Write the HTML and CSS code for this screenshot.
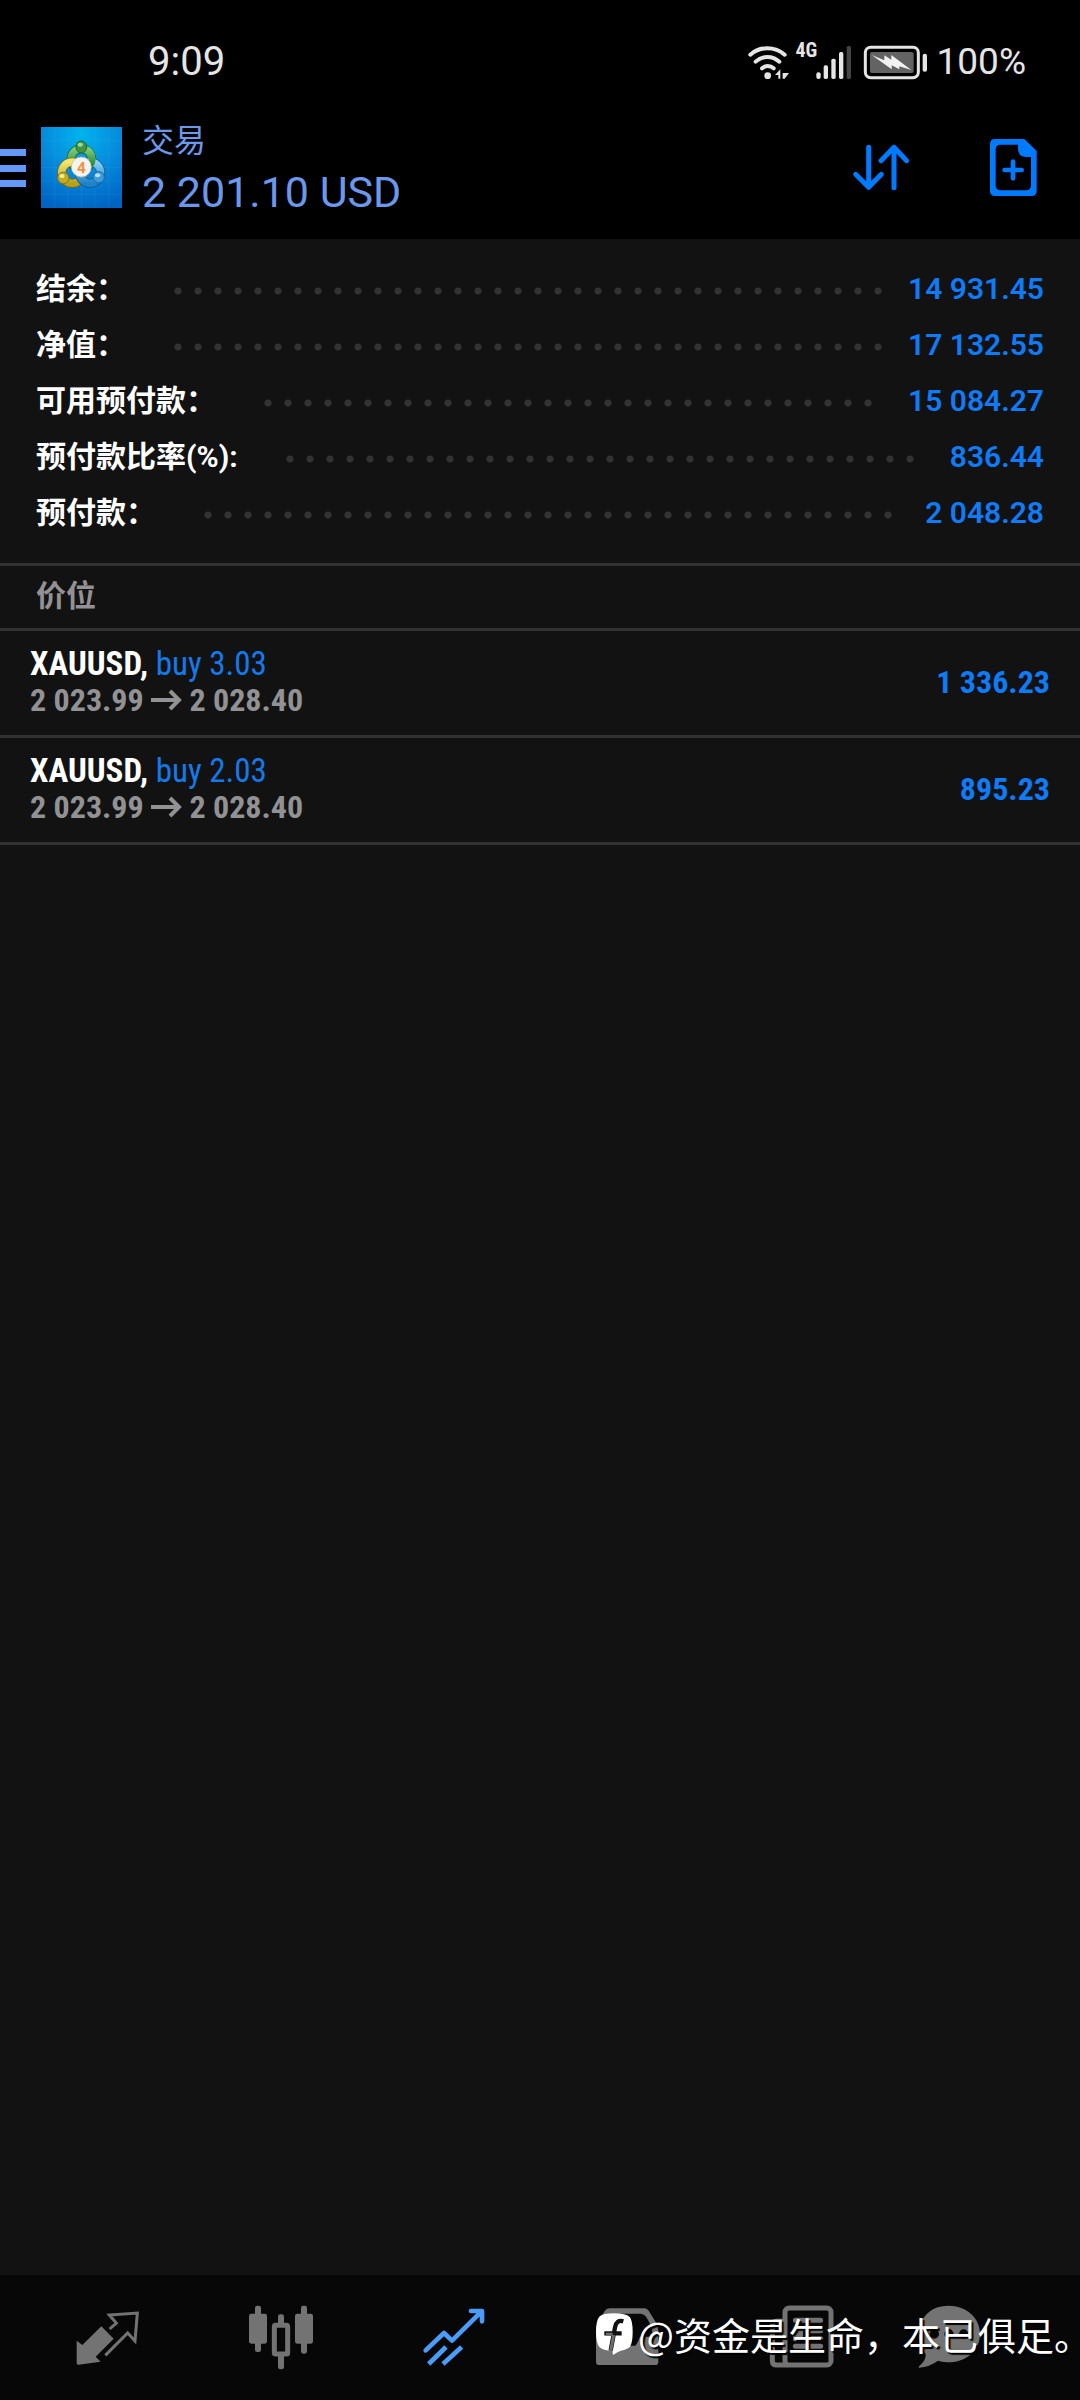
FILE: index.html
```
<!DOCTYPE html>
<html lang="zh-CN">
<head>
<meta charset="utf-8">
<meta name="viewport" content="width=device-width, initial-scale=1">
<title>交易</title>
<link rel="stylesheet" href="styles.css">
</head>
<body>
<div class="status">
  <time class="clock">9:09</time>
  <div class="status-icons">
    <svg class="wifi" viewBox="87 63 123 105" aria-hidden="true">
      <g fill="none" stroke="#e5e5e5" stroke-width="12" stroke-linecap="round">
        <path d="M94 92C122 66 168 66 197 92"/><path d="M110 113C130 94 160 94 181 113"/><path d="M129 133C138 124 154 124 164 133"/>
      </g>
      <circle cx="146" cy="155" r="10" fill="#e5e5e5"/>
      <path d="M168 153L184 136V164H178V153ZM191 147H210L197 164H191Z" fill="#e5e5e5"/>
    </svg>
    <span class="net">4G</span>
    <svg class="bars" viewBox="288 63 105 105" aria-hidden="true">
      <g fill="#e5e5e5">
        <rect x="289" y="145" width="13" height="20" rx="6"/><rect x="311" y="124" width="13" height="41" rx="5"/>
        <rect x="334" y="104" width="13" height="61" rx="5"/><rect x="357" y="84" width="13" height="81" rx="5"/>
      </g>
      <rect x="380" y="66" width="13" height="99" rx="5" fill="#444"/>
    </svg>
    <svg class="battery" viewBox="432 66 189 105" aria-hidden="true">
      <rect x="436" y="73" width="159" height="91" rx="16" fill="none" stroke="#e5e5e5" stroke-width="9"/>
      <rect x="450" y="87" width="131" height="63" rx="6" fill="#636363"/>
      <path d="M455 96L493 112V97L514 110V96L574 141L538 130V139L515 127V139Z" fill="#f2f2f2"/>
      <rect x="608" y="92" width="13" height="54" rx="6" fill="#e5e5e5"/>
    </svg>
    <span class="percent">100%</span>
  </div>
</div>

<header class="topbar">
  <button class="icon-button" type="button" aria-label="菜单">
    <svg class="menu" viewBox="0 0 26 38"><path d="M0 0H26V7H0ZM0 16H26V23H0ZM0 31H26V38H0Z" fill="#6398f8"/></svg>
  </button>
  <svg class="logo" viewBox="123 51 243 243" aria-hidden="true">
    <defs>
      <radialGradient id="sky" cx="50%" cy="8%" r="95%"><stop offset="0" stop-color="#00b4ee"/><stop offset=".5" stop-color="#068bdc"/><stop offset="1" stop-color="#0064c4"/></radialGradient>
      <linearGradient id="green" x1="0" y1="0" x2="0" y2="1"><stop offset="0" stop-color="#7cc979"/><stop offset="1" stop-color="#238532"/></linearGradient>
      <linearGradient id="gold" x1="0" y1="0" x2="0" y2="1"><stop offset="0" stop-color="#f2e76c"/><stop offset="1" stop-color="#b9a019"/></linearGradient>
      <linearGradient id="blue" x1="0" y1="0" x2="0" y2="1"><stop offset="0" stop-color="#8bd0f5"/><stop offset="1" stop-color="#1c83c8"/></linearGradient>
    </defs>
    <path d="M123 51H366V294H123Z" fill="url(#sky)"/>
    <path d="M164 51V294M204 51V294M245 51V294M285 51V294M326 51V294M123 92H366M123 132H366M123 172H366M123 213H366M123 253H366" stroke="#5cc4f4" stroke-opacity=".18" stroke-width="2"/>
    <g fill="none" stroke-width="22">
      <circle cx="244" cy="147" r="31" stroke="#1c5f3a" stroke-width="27"/><circle cx="244" cy="147" r="31" stroke="url(#green)"/>
      <circle cx="217" cy="188" r="32" stroke="#6c6c20" stroke-width="27"/><circle cx="217" cy="188" r="32" stroke="url(#gold)"/>
      <circle cx="270" cy="188" r="32" stroke="#155a94" stroke-width="27"/><circle cx="270" cy="188" r="32" stroke="url(#blue)"/>
      <path d="M259 118A31 31 0 0 1 268 167" stroke="url(#green)" stroke-width="20"/>
    </g>
    <ellipse cx="244" cy="111" rx="16" ry="18" fill="#3f9544" stroke="#1c6a2e" stroke-width="3"/><ellipse cx="241" cy="104" rx="8" ry="6" fill="#a2d89a"/>
    <circle cx="190" cy="204" r="17" fill="#c6ab1f" stroke="#80741c" stroke-width="3"/><ellipse cx="186" cy="198" rx="8" ry="6" fill="#f4eb94"/>
    <circle cx="296" cy="202" r="17" fill="#3e9cd8" stroke="#166aa9" stroke-width="3"/><ellipse cx="293" cy="196" rx="8" ry="6" fill="#b4e1fa"/>
    <circle cx="244" cy="171" r="30" fill="#f4f3f2" stroke="#b9bdbb" stroke-width="2"/>
    <text x="244" y="188" class="logo-digit">4</text>
  </svg>
  <div class="title">
    <h1>交易</h1>
    <p>2 201.10 USD</p>
  </div>
  <button class="icon-button" type="button" aria-label="排序">
    <svg class="sort" viewBox="400 372 171 141"><g fill="none" stroke="#007aff" stroke-width="15" stroke-linecap="round" stroke-linejoin="round"><path d="M447 382V502M408 463L447 502L485 463"/><path d="M523 503V382M484 422L523 382L561 422"/></g></svg>
  </button>
  <button class="icon-button" type="button" aria-label="新订单">
    <svg class="doc" viewBox="811 357 141 171"><path fill="#007aff" fill-rule="evenodd" d="M826 357H914L951 393V512Q951 528 935 528H827Q811 528 811 512V373Q811 357 826 357ZM842 374Q828 374 828 389V496Q828 511 843 511H919Q934 511 934 496V411H917Q896 410 895 387V374Z"/><path d="M880 425V475M855 450H906" stroke="#007aff" stroke-width="14" stroke-linecap="round"/></svg>
  </button>
</header>

<main>
  <dl class="summary">
    <div class="line"><dt>结余：</dt><dd class="leader"><span></span></dd><dd class="value">14 931.45</dd></div>
    <div class="line"><dt>净值：</dt><dd class="leader"><span></span></dd><dd class="value">17 132.55</dd></div>
    <div class="line"><dt>可用预付款：</dt><dd class="leader"><span></span></dd><dd class="value">15 084.27</dd></div>
    <div class="line"><dt>预付款比率(%):</dt><dd class="leader"><span></span></dd><dd class="value">836.44</dd></div>
    <div class="line"><dt>预付款：</dt><dd class="leader"><span></span></dd><dd class="value">2 048.28</dd></div>
  </dl>
  <h2 class="section">价位</h2>
  <ul class="positions">
    <li>
      <div><p><strong>XAUUSD,</strong> <span class="side">buy 3.03</span></p>
      <p class="prices">2 023.99 <svg class="arrow" viewBox="0 0 31 22" role="img" aria-label="至"><path d="M0 11H28M19 2L28 11L19 20" fill="none" stroke="#929295" stroke-width="4"/></svg> 2 028.40</p></div>
      <span class="profit">1 336.23</span>
    </li>
    <li>
      <div><p><strong>XAUUSD,</strong> <span class="side">buy 2.03</span></p>
      <p class="prices">2 023.99 <svg class="arrow" viewBox="0 0 31 22" role="img" aria-label="至"><path d="M0 11H28M19 2L28 11L19 20" fill="none" stroke="#929295" stroke-width="4"/></svg> 2 028.40</p></div>
      <span class="profit">895.23</span>
    </li>
  </ul>
</main>

<nav class="tabs">
  <a href="#quotes" aria-label="行情"><svg viewBox="48 46 192 192"><path d="M124 107L161 144L107 198L122 213L56 222Q50 223 50 216V150L67 163Z" fill="#737373"/><path d="M149 115L169 97L148 73L232 67L225 151L203 127L136 194" fill="none" stroke="#737373" stroke-width="9"/></svg></a>
  <a href="#chart" aria-label="图表"><svg viewBox="564 46 192 192"><g fill="#737373"><rect x="582" y="45" width="18" height="139" rx="7"/><rect x="564" y="69" width="54" height="90" rx="7"/><rect x="720" y="45" width="18" height="144" rx="7"/><rect x="702" y="69" width="54" height="90" rx="7"/><rect x="651" y="71" width="18" height="165" rx="7"/></g><rect x="640" y="104" width="40" height="86" rx="4" fill="#080808" stroke="#737373" stroke-width="15"/></svg></a>
  <a href="#trade" aria-label="交易" aria-current="page"><svg viewBox="64 46 192 192"><g fill="none" stroke="#4b9cf8" stroke-width="14" stroke-linejoin="round"><path stroke-linecap="round" d="M75 179L130 127L154 150L242 63M211 61H244V92"/><path d="M84 220L136 169M127 220L183 169"/></g></svg></a>
  <a href="#history" aria-label="历史"><svg viewBox="585 46 192 192"><path fill="#737373" fill-rule="evenodd" d="M628 53H732Q742 53 747 62L765 91Q775 105 775 125V213Q775 223 765 223H598Q588 223 588 213V125Q588 105 597 91L614 61Q619 53 628 53ZM641 69Q629 69 622 80Q604 103 604 138H641Q646 154 655 165H706Q715 154 720 138H758Q758 108 739 80Q732 69 720 69Z"/></svg></a>
  <a href="#news" aria-label="新闻"><svg viewBox="204 46 192 192"><g fill="none" stroke="#737373" stroke-width="15"><rect x="255" y="52" width="138" height="171" rx="12"/><path d="M255 92H230Q217 92 217 105V210Q217 223 230 223H265"/><path stroke-linecap="round" d="M286 89H362M324 120H362M324 144H362M286 167H362"/></g><rect x="279" y="112" width="30" height="40" rx="6" fill="#737373"/></svg></a>
  <a href="#messages" aria-label="消息"><svg viewBox="651 46 192 192"><path fill="#737373" fill-rule="evenodd" d="M745 45C800 45 840 82 840 129C840 180 798 216 740 215Q724 214 714 210Q690 228 657 231Q654 228 662 222Q678 208 677 190C640 150 650 45 745 45ZM703 116A14 14 0 1 0 703 144A14 14 0 1 0 703 116M747 116A14 14 0 1 0 747 144A14 14 0 1 0 747 116M791 116A14 14 0 1 0 791 144A14 14 0 1 0 791 116"/></svg></a>
  <div class="watermark">
    <svg viewBox="590 91 114 129" aria-hidden="true"><path d="M645 92Q680 92 691 103Q700 113 700 148Q700 180 692 192Q684 200 665 204Q656 207 641 217L639 205Q610 204 600 193Q590 181 590 148Q590 113 600 102Q611 92 645 92Z" fill="#fff"/><g fill="none" stroke="#111" stroke-width="13"><path d="M672 116Q652 110 647 134L634 204M615 152H667"/></g><path d="M643 157L634 205M620 155H640" stroke="#6b6b6b" stroke-width="9"/></svg>
    <span>@资金是生命，本已俱足<span class="stop">。</span></span>
  </div>
</nav>
</body>
</html>
```
FILE: styles.css
```
* { box-sizing: border-box; margin: 0; padding: 0; }

body {
  display: flex;
  flex-direction: column;
  min-height: 100vh;
  background: #121212;
  color: #fff;
  font-family: Roboto, "Noto Sans CJK SC", sans-serif;
}

svg { display: block; overflow: visible; }

/* Status bar */
.status {
  display: flex;
  justify-content: space-between;
  padding: 37px 54px 0 148px;
  background: #000;
  color: #e5e5e5;
  line-height: 48px;
}
.clock { font-size: 40px; line-height: 50px; }
.status-icons { display: flex; align-items: center; }
.wifi { width: 41px; height: 35px; }
.net {
  align-self: flex-start;
  width: 20px;
  margin-left: 7px;
  font: 700 20px/26px "Roboto Condensed", Roboto, sans-serif;
}
.bars { width: 35px; height: 35px; }
.battery { width: 63px; height: 35px; margin-left: 13px; }
.percent { margin-left: 10px; font-size: 37px; }

/* Title bar */
.topbar {
  display: flex;
  align-items: center;
  padding: 40px 43px 31px 0;
  background: #000;
}
.icon-button { border: 0; background: none; cursor: pointer; }
.menu { width: 26px; height: 38px; }
.logo { width: 81px; height: 81px; margin-left: 15px; }
.logo-digit { fill: #f0923f; font: 700 46px Roboto, sans-serif; text-anchor: middle; }
.title {
  flex: 1;
  margin: -16px 0 -16px 20px;
  padding-bottom: 4px;
  color: #6b98ec;
}
.title h1 { font-size: 32px; font-weight: 400; line-height: 52px; }
.title p { font-size: 43px; line-height: 50px; }
.sort { width: 57px; height: 47px; }
.doc { width: 47px; height: 57px; margin-left: 80px; }

main { flex: 1; }

/* Account summary */
.summary { padding: 22px 36px; }
.line {
  display: flex;
  align-items: center;
  font-size: 30px;
  font-weight: 700;
  line-height: 56px;
}
.leader { flex: 1; margin: 4px 18px 0 42px; }
.leader span {
  display: block;
  width: 100%;
  width: round(down, 100%, 20px);
  height: 8px;
  background: radial-gradient(circle, #333 3px, transparent 4px) 0 0 / 20px 8px repeat-x;
}
.value { color: #107bf6; font-weight: 600; }

.section {
  padding: 4px 36px 6px;
  border-top: 3px solid #313131;
  border-bottom: 3px solid #313131;
  color: #929295;
  font-size: 30px;
  font-weight: 700;
  line-height: 52px;
}

/* Open positions */
.positions { list-style: none; font-family: "Roboto Condensed", Roboto, sans-serif; font-size: 33px; line-height: 37px; }
.positions li {
  display: flex;
  justify-content: space-between;
  align-items: center;
  padding: 14px 30px 16px;
  border-bottom: 3px solid #313131;
}
.side { color: #147aec; }
.prices { color: #929295; font-size: 32px; font-weight: 700; }
.arrow { display: inline-block; width: 31px; height: 22px; }
.profit { color: #107bf6; font-size: 32px; font-weight: 700; }

/* Bottom tabs */
.tabs {
  position: relative;
  display: grid;
  grid-template-columns: repeat(5, 173fr) 125fr;
  align-items: center;
  height: 125px;
  padding: 0 69px 0 21px;
  background: #070707;
}
.tabs a { display: flex; justify-content: center; }
.tabs a svg { width: 64px; height: 64px; }

.watermark {
  position: absolute;
  right: 7px;
  top: 31px;
  display: flex;
  align-items: center;
  gap: 4px;
  font-family: "Noto Sans CJK SC", sans-serif;
  font-size: 38px;
  line-height: 56px;
  white-space: nowrap;
  text-shadow: 2px 2px 1px #000;
}
.watermark svg { width: 38px; height: 43px; }
.stop { font-feature-settings: "halt"; }
```
